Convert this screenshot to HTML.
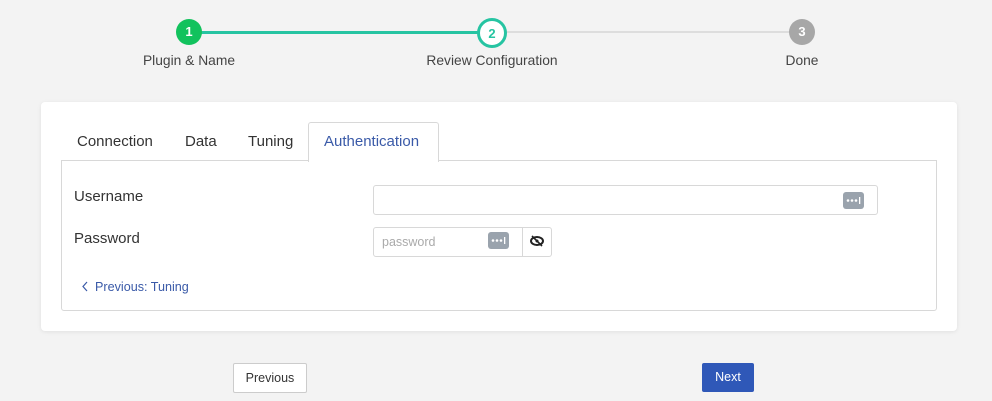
<!DOCTYPE html>
<html><head><style>
body{margin:0;width:992px;height:401px;background:#f3f3f3;font-family:"Liberation Sans",sans-serif;position:relative;overflow:hidden}
.a{position:absolute}
.c{width:26px;height:26px;border-radius:50%;box-sizing:border-box;font-size:13px;font-weight:bold;text-align:center;line-height:26px}
.l{font-size:13.8px;color:#444;text-align:center;width:200px}
.tab{font-size:15px;color:#333;top:133px}
</style></head><body>
<div class="a" style="left:189px;top:31px;width:303px;height:3px;background:#26c4a2"></div>
<div class="a" style="left:492px;top:31px;width:310px;height:2px;background:#ddd"></div>
<div class="a c" style="left:176px;top:19px;background:#12c25d;color:#fff">1</div>
<div class="a c" style="left:477px;top:18px;width:30px;height:30px;line-height:25px;background:#fff;border:3px solid #26c4a2;color:#26c4a2">2</div>
<div class="a c" style="left:789px;top:19px;background:#a7a7a7;color:#fff">3</div>
<div class="a l" style="left:89px;top:53px">Plugin &amp; Name</div>
<div class="a l" style="left:392px;top:53px">Review Configuration</div>
<div class="a l" style="left:702px;top:53px">Done</div>
<div class="a" style="left:41px;top:102px;width:916px;height:229px;background:#fff;border-radius:4px;box-shadow:0 1px 4px rgba(0,0,0,.08)"></div>
<div class="a" style="left:61px;top:160px;width:874px;height:149px;border:1px solid #d8d8d8;border-radius:0 0 3px 3px"></div>
<div class="a" style="left:308px;top:122px;width:129px;height:39px;background:#fff;border:1px solid #d8d8d8;border-bottom:none;border-radius:3px 3px 0 0"></div>
<div class="a tab" style="left:77px">Connection</div>
<div class="a tab" style="left:185px">Data</div>
<div class="a tab" style="left:248px">Tuning</div>
<div class="a tab" style="left:324px;color:#3a5aa8">Authentication</div>
<div class="a" style="left:74px;top:188px;font-size:15px;color:#333">Username</div>
<div class="a" style="left:74px;top:230px;font-size:15px;color:#333">Password</div>
<div class="a" style="left:373px;top:185px;width:503px;height:28px;border:1px solid #d8d8d8;border-radius:3px"></div>
<svg class="a" style="left:843px;top:192px" width="21" height="17" viewBox="0 0 21 17"><rect width="21" height="17" rx="3" fill="#9aa3ad"/><circle cx="5" cy="8.5" r="1.3" fill="#fff"/><circle cx="9" cy="8.5" r="1.3" fill="#fff"/><circle cx="13" cy="8.5" r="1.3" fill="#fff"/><rect x="16" y="5" width="1.3" height="7" fill="#fff"/></svg>
<div class="a" style="left:373px;top:227px;width:177px;height:28px;border:1px solid #d8d8d8;border-radius:3px"></div>
<div class="a" style="left:522px;top:227px;width:1px;height:30px;background:#d8d8d8"></div>
<div class="a" style="left:382px;top:235px;font-size:12.5px;color:#aaa">password</div>
<svg class="a" style="left:488px;top:232px" width="21" height="17" viewBox="0 0 21 17"><rect width="21" height="17" rx="3" fill="#9aa3ad"/><circle cx="5" cy="8.5" r="1.3" fill="#fff"/><circle cx="9" cy="8.5" r="1.3" fill="#fff"/><circle cx="13" cy="8.5" r="1.3" fill="#fff"/><rect x="16" y="5" width="1.3" height="7" fill="#fff"/></svg>
<svg class="a" style="left:530px;top:235px" width="14" height="12" viewBox="0 0 14 12"><ellipse cx="7" cy="6" rx="6" ry="4" fill="none" stroke="#222" stroke-width="2"/><circle cx="7" cy="6" r="1.5" fill="#222"/><line x1="2" y1="1" x2="12" y2="11" stroke="#222" stroke-width="1.6"/></svg>
<svg class="a" style="left:81px;top:281px" width="8" height="11" viewBox="0 0 8 11"><path d="M6 1L2 5.5L6 10" fill="none" stroke="#3a5aa8" stroke-width="1.2"/></svg>
<div class="a" style="left:95px;top:280px;font-size:12.6px;color:#3a5aa8">Previous: Tuning</div>
<div class="a" style="left:233px;top:363px;width:72px;height:28px;background:#fff;border:1px solid #ccc;border-radius:2px;font-size:12.5px;color:#333;text-align:center;line-height:28px">Previous</div>
<div class="a" style="left:702px;top:363px;width:52px;height:29px;background:#2f58b8;border-radius:2px;font-size:12.5px;color:#fff;text-align:center;line-height:29px">Next</div>
</body></html>
